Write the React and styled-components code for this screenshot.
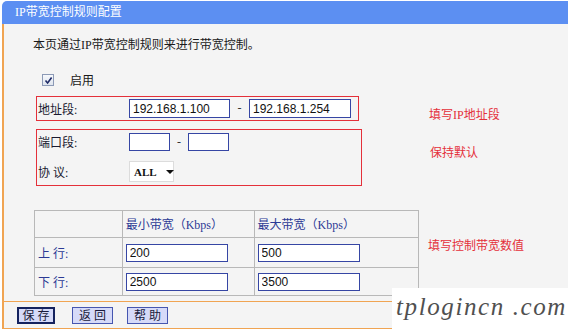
import React from 'react';
import styled, { createGlobalStyle } from 'styled-components';

const GlobalStyle = createGlobalStyle`
  body {
    margin: 0;
    background: #fff;
    font-family: "Liberation Serif", "Noto Sans CJK SC", serif;
    font-size: 12px;
  }
`

const ORANGE = '#f0a452';
const RED = '#e4303a';
const NAVY = '#2c3a94';

const Page = styled.div`
  position: relative;
  width: 568px;
  height: 329px;
  padding-left: 2px;
  box-sizing: border-box;
  overflow: hidden;
  background: #fff;
`
const TitleBar = styled.div`
  height: 23px;
  margin-top: 1px;
  padding-left: 13px;
  background: #5c8ff2;
  border-top-left-radius: 5px;
  color: #fff;
  line-height: 23px;
  font-size: 12px;
`
const Body = styled.div`
  height: 277px;
  box-sizing: border-box;
  background: #f4f4f4;
  border-left: 2px solid ${ORANGE};
  padding-top: 13px;
  display: flex;
  flex-direction: column;
`
const Intro = styled.div`
  margin-left: 29px;
  line-height: 16px;
  color: #1a1a1a;
`
const CheckRow = styled.label`
  display: flex;
  align-items: center;
  gap: 16px;
  height: 16px;
  margin: 19px 0 0 38px;
  color: #1a1a1a;
`
const CheckBox = styled.span`
  display: flex;
  align-items: center;
  justify-content: center;
  width: 12px;
  height: 12px;
  box-sizing: border-box;
  border: 1px solid #8c9ab6;
  background: linear-gradient(#f6f8fc, #dfe5ee);
`
const Section = styled.div`
  display: grid;
  grid-template-columns: ${p => p.$col}px auto;
  align-items: start;
  margin: ${p => p.$top}px 0 0 ${p => p.$left}px;
`
const RedBox = styled.div`
  width: ${p => p.$w}px;
  height: ${p => p.$h}px;
  box-sizing: border-box;
  border: 1px solid ${RED};
  padding: ${p => p.$pad || '0 0 0 1px'};
  display: flex;
  flex-direction: column;
  justify-content: ${p => p.$center ? 'center' : 'flex-start'};
  gap: 9px;
`
const FieldRow = styled.div`
  display: flex;
  align-items: center;
  height: ${p => p.$h || 20}px;
`
const Label = styled.span`
  width: 91px;
  color: ${p => p.$navy ? NAVY : '#1a1a30'};
  white-space: pre;
`
const TextInput = styled.input`
  width: ${p => p.$w}px;
  height: ${p => p.$h || 19}px;
  box-sizing: border-box;
  margin: 0;
  padding: 0 0 0 3px;
  border: 1px solid #3646a4;
  background: #fff;
  font-family: "Liberation Sans", Arial, sans-serif;
  font-size: 12px;
  color: #111;
  outline: none;
`
const Dash = styled.span`
  width: ${p => p.$w}px;
  text-align: center;
  color: #333;
`
const Select = styled.span`
  display: flex;
  align-items: center;
  gap: 9px;
  width: 45px;
  height: 21px;
  box-sizing: border-box;
  padding-left: 4px;
  border: 1px solid #dcdcdc;
  background: #fff;
  font-weight: bold;
  font-size: 11px;
  color: #111;
`
const Arrow = styled.span`
  width: 0;
  height: 0;
  border-left: 4px solid transparent;
  border-right: 4px solid transparent;
  border-top: 4px solid #111;
`
const Note = styled.div`
  padding-top: ${p => p.$top}px;
  line-height: 16px;
  color: ${RED};
`
const Table = styled.table`
  width: 385px;
  border-collapse: collapse;
  border: 1px solid #a6a6a6;
`
const Cell = styled.td`
  width: ${p => p.$w}px;
  height: ${p => p.$h}px;
  padding: 0 0 0 3px;
  border: 1px solid #b8b8b8;
  color: ${NAVY};
  vertical-align: middle;
`
const Footer = styled.div`
  height: 28px;
  box-sizing: border-box;
  border-top: 1px solid ${ORANGE};
  border-bottom: 1px solid ${ORANGE};
  border-left: 2px solid ${ORANGE};
  background: #f4f4f4;
  display: flex;
  align-items: flex-start;
  padding: 5px 0 0 13px;
`
const Button = styled.button`
  width: ${p => p.$w}px;
  height: 17px;
  margin: 0 ${p => p.$gap}px 0 0;
  padding: 0;
  box-sizing: border-box;
  border: ${p => p.$focus ? '2px solid #14225e' : '1px solid #4656b0'};
  background: #d6daf8;
  font-family: "Liberation Serif", "Noto Sans CJK SC", serif;
  font-size: 12px;
  line-height: 14px;
  color: #1a1a3a;
  white-space: pre;
`
const Watermark = styled.div`
  position: absolute;
  right: 0;
  bottom: 0;
  width: 176px;
  height: 41px;
  background: #fff;
  padding-left: 4px;
  box-sizing: border-box;
  font-family: "Liberation Serif", serif;
  font-style: italic;
  font-size: 25px;
  letter-spacing: 1.6px;
  line-height: 38px;
  color: #505050;
  white-space: pre;
`

const App = () => {
  return (
    <Page>
      <GlobalStyle />
      <TitleBar>IP带宽控制规则配置</TitleBar>
      <Body>
        <Intro>本页通过IP带宽控制规则来进行带宽控制。</Intro>
        <CheckRow>
          <CheckBox>
            <svg width="9" height="9" viewBox="0 0 9 9">
              <path d="M1.5 4.5 L3.6 7 L7.6 1.6" fill="none" stroke="#1e2a66" strokeWidth="1.6" />
            </svg>
          </CheckBox>
          启用
        </CheckRow>

        <Section $col={393} $top={8} $left={32}>
          <RedBox $w={323} $h={25} $center>
            <FieldRow $h={19}>
              <Label>地址段:</Label>
              <TextInput $w={101} defaultValue="192.168.1.100" />
              <Dash $w={19}>-</Dash>
              <TextInput $w={102} defaultValue="192.168.1.254" />
            </FieldRow>
          </RedBox>
          <Note $top={11}>填写IP地址段</Note>
        </Section>

        <Section $col={394} $top={6} $left={32}>
          <RedBox $w={326} $h={57} $pad="2px 0 0 1px">
            <FieldRow $h={20}>
              <Label>端口段:</Label>
              <TextInput $w={41} $h={18} />
              <Dash $w={18}>-</Dash>
              <TextInput $w={41} $h={18} />
            </FieldRow>
            <FieldRow $h={21}>
              <Label>协 议:</Label>
              <Select>ALL<Arrow /></Select>
            </FieldRow>
          </RedBox>
          <Note $top={16}>保持默认</Note>
        </Section>

        <Section $col={394} $top={24} $left={30}>
          <Table>
            <tbody>
              <tr>
                <Cell $w={89} $h={26} />
                <Cell $w={130} $h={26}>最小带宽（Kbps）</Cell>
                <Cell $w={165} $h={26}>最大带宽（Kbps）</Cell>
              </tr>
              <tr>
                <Cell $h={29}>上 行:</Cell>
                <Cell><TextInput $w={102} $h={18} defaultValue="200" /></Cell>
                <Cell><TextInput $w={102} $h={18} defaultValue="500" /></Cell>
              </tr>
              <tr>
                <Cell $h={27}>下 行:</Cell>
                <Cell><TextInput $w={102} $h={18} defaultValue="2500" /></Cell>
                <Cell><TextInput $w={102} $h={18} defaultValue="3500" /></Cell>
              </tr>
            </tbody>
          </Table>
          <Note $top={28}>填写控制带宽数值</Note>
        </Section>
      </Body>
      <Footer>
        <Button $w={38} $gap={17} $focus>保 存</Button>
        <Button $w={41} $gap={14}>返 回</Button>
        <Button $w={41} $gap={0}>帮 助</Button>
      </Footer>
      <Watermark>tplogincn .com</Watermark>
    </Page>
  );
};

export default App;
